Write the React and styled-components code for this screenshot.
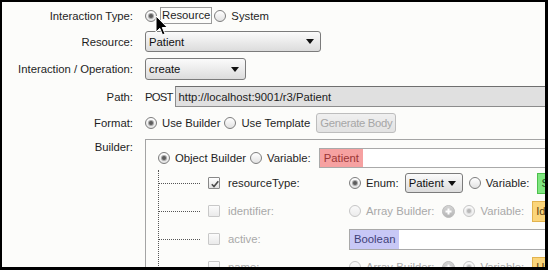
import React from "react";
import styled, { createGlobalStyle } from "styled-components";

const Global = createGlobalStyle`
  html, body { margin: 0; padding: 0; background: #000; }
  * { box-sizing: border-box; }
`;

const Page = styled.div`
  width: 548px;
  height: 270px;
  padding: 2px 3px 3px 2px;
  background: #000;
  font-family: "Liberation Sans", Arial, sans-serif;
  font-size: 11.3px;
  color: #1e1e1e;
`;

const Panel = styled.div`
  position: relative;
  width: 100%;
  height: 100%;
  background: #fcfcfa;
  overflow: hidden;
`;

const Form = styled.div`
  display: grid;
  grid-template-columns: 131px 620px;
  grid-template-rows: 19px 21px 22px 21px 20px auto;
  column-gap: 12px;
  row-gap: 6px;
  padding-top: 4px;
`;

const Label = styled.div`
  text-align: right;
  align-self: ${(p) => (p.$top ? "start" : "center")};
  padding-top: ${(p) => (p.$top ? "2px" : "0")};
  white-space: nowrap;
`;

const Cell = styled.div`
  display: flex;
  align-items: center;
  gap: ${(p) => p.$gap ?? 4}px;
  min-width: 0;
`;

const RadioCircle = styled.span`
  position: relative;
  width: 12px;
  height: 12px;
  flex-shrink: 0;
  border-radius: 50%;
  border: 1px solid ${(p) => (p.$disabled ? "#c6c6c6" : "#7d7d7d")};
  background: ${(p) =>
    p.$disabled
      ? "linear-gradient(#fafafa, #ececec)"
      : "linear-gradient(#ffffff, #e2e2e2)"};
  &::after {
    content: "";
    display: ${(p) => (p.$checked ? "block" : "none")};
    position: absolute;
    left: 3px;
    top: 3px;
    width: 4px;
    height: 4px;
    border-radius: 50%;
    background: ${(p) => (p.$disabled ? "#b8b8b8" : "#5c5c5c")};
    box-shadow: 0 0 0 1px ${(p) => (p.$disabled ? "#dcdcdc" : "#a9a9a9")};
  }
`;

const Option = styled.label`
  display: inline-flex;
  align-items: center;
  gap: 5px;
  white-space: nowrap;
  color: ${(p) => (p.$disabled ? "#a9a9a9" : "inherit")};
`;

const FocusText = styled.span`
  outline: 1px solid #9a9a9a;
  outline-offset: 1px;
  line-height: 13px;
`;

const Radio = ({ checked, disabled, children, focus }) => (
  <Option $disabled={disabled}>
    <RadioCircle $checked={checked} $disabled={disabled} />
    {children != null && (focus ? <FocusText>{children}</FocusText> : <span>{children}</span>)}
  </Option>
);

const Select = styled.div`
  display: flex;
  align-items: center;
  justify-content: space-between;
  width: ${(p) => p.$w}px;
  height: ${(p) => p.$h ?? 21}px;
  flex-shrink: 0;
  padding: 0 6px 0 3px;
  border: 1px solid #7b7b7b;
  border-radius: 3px;
  background: linear-gradient(#fbfbfb, #dcdcdc);
  color: #111;
  white-space: nowrap;
`;

const Arrow = styled.span`
  width: 0;
  height: 0;
  border-left: 4.5px solid transparent;
  border-right: 4.5px solid transparent;
  border-top: 5px solid #111;
`;

const Method = styled.span`
  letter-spacing: -0.8px;
`;

const PathInput = styled.div`
  flex: 1;
  height: 21px;
  display: flex;
  align-items: center;
  padding-left: 3px;
  background: #e0e0e0;
  border: 1px solid #8c8c8c;
  border-top-color: #6e6e6e;
  color: #222;
  white-space: nowrap;
`;

const Button = styled.div`
  height: 20px;
  display: flex;
  align-items: center;
  padding: 0 3px;
  margin-left: 2px;
  border: 1px solid #bdbdbd;
  border-radius: 3px;
  background: linear-gradient(#f0f0f0, #e2e2e2);
  color: #a6a6a6;
  letter-spacing: -0.3px;
  white-space: nowrap;
`;

const BuilderBox = styled.div`
  border: 1px solid #a4a4a4;
  padding: 8px 0 30px 12px;
  height: 200px;
`;

const ObjectRow = styled.div`
  display: flex;
  align-items: center;
  height: 20px;
  gap: 4px;
`;

const TagField = styled.div`
  display: flex;
  align-items: stretch;
  height: ${(p) => p.$h ?? 20}px;
  width: 600px;
  margin-left: ${(p) => p.$ml ?? 0}px;
  flex-shrink: 0;
  border: 1px solid #a9a9a9;
  background: #fff;
`;

const Tag = styled.span`
  display: flex;
  align-items: center;
  padding: 0 4px;
  background: ${(p) => p.$bg};
  color: ${(p) => p.$fg};
  white-space: nowrap;
`;

const TypeBox = styled.div`
  display: flex;
  align-items: center;
  height: 21px;
  width: 120px;
  flex-shrink: 0;
  padding: 0 3px;
  background: ${(p) => p.$bg};
  border: 1px solid ${(p) => p.$border};
  color: ${(p) => p.$fg};
  margin-left: 2px;
  white-space: nowrap;
`;

const Tree = styled.div`
  margin-top: 2px;
  padding-top: 2px;
  border-left: 1px dotted #555;
  display: flex;
  flex-direction: column;
  gap: 6px;
`;

const TreeRow = styled.div`
  display: flex;
  align-items: center;
  height: 22px;
`;

const Connector = styled.span`
  width: 41px;
  height: 0;
  flex-shrink: 0;
  border-top: 1px dotted #555;
  margin-right: 8px;
`;

const CheckBox = styled.span`
  position: relative;
  width: 12px;
  height: 12px;
  flex-shrink: 0;
  border: 1px solid ${(p) => (p.$disabled ? "#c8c8c8" : "#888")};
  border-radius: 1px;
  background: ${(p) =>
    p.$disabled ? "linear-gradient(#fbfbfb, #eaeaea)" : "linear-gradient(#ffffff, #e0e0e0)"};
  margin-right: 8px;
  svg { position: absolute; left: 1px; top: 1px; }
`;

const FieldName = styled.span`
  width: 121px;
  flex-shrink: 0;
  white-space: nowrap;
  color: ${(p) => (p.$disabled ? "#a9a9a9" : "#1e1e1e")};
`;

const FieldCtl = styled.div`
  display: flex;
  align-items: center;
  gap: 6px;
`;

const PlusBtn = styled.svg`
  flex-shrink: 0;
  margin: 0 2px;
`;

const Cursor = styled.svg`
  position: absolute;
  left: 153px;
  top: 13px;
`;

const Plus = () => (
  <PlusBtn width="13" height="13" viewBox="0 0 13 13">
    <defs>
      <linearGradient id="pg" x1="0" y1="0" x2="0" y2="1">
        <stop offset="0" stopColor="#d6d6d6" />
        <stop offset="1" stopColor="#b4b4b4" />
      </linearGradient>
    </defs>
    <circle cx="6.5" cy="6.5" r="6" fill="url(#pg)" stroke="#bdbdbd" />
    <path d="M6.5 3.5v6M3.5 6.5h6" stroke="#fff" strokeWidth="2" />
  </PlusBtn>
);

const Check = () => (
  <svg width="10" height="10" viewBox="0 0 10 10">
    <path d="M1.8 5.2 L4 7.6 L8.3 2.2" fill="none" stroke="#4a4a4a" strokeWidth="1.6" />
  </svg>
);

const ArrayRow = ({ name, type }) => (
  <TreeRow>
    <Connector />
    <CheckBox $disabled />
    <FieldName $disabled>{name}</FieldName>
    <FieldCtl>
      <Radio disabled>Array Builder:</Radio>
      <Plus />
      <Radio disabled checked>Variable:</Radio>
      <TypeBox $bg="#fbd57a" $border="#e2b34e" $fg="#5a4010">{type}</TypeBox>
    </FieldCtl>
  </TreeRow>
);

export default function App() {
  return (
    <>
      <Global />
      <Page>
        <Panel>
          <Form>
            <Label>Interaction Type:</Label>
            <Cell $gap={4}>
              <Radio checked focus>Resource</Radio>
              <Radio>System</Radio>
            </Cell>

            <Label>Resource:</Label>
            <Cell>
              <Select $w={176}>
                <span>Patient</span>
                <Arrow />
              </Select>
            </Cell>

            <Label>Interaction / Operation:</Label>
            <Cell>
              <Select $w={101} $h={22}>
                <span>create</span>
                <Arrow />
              </Select>
            </Cell>

            <Label>Path:</Label>
            <Cell $gap={2}>
              <Method>POST</Method>
              <PathInput>http://localhost:9001/r3/Patient</PathInput>
            </Cell>

            <Label>Format:</Label>
            <Cell $gap={4}>
              <Radio checked>Use Builder</Radio>
              <Radio>Use Template</Radio>
              <Button>Generate Body</Button>
            </Cell>

            <Label $top>Builder:</Label>
            <BuilderBox>
              <ObjectRow>
                <Radio checked>Object Builder</Radio>
                <Radio>Variable:</Radio>
                <TagField $ml={4}>
                  <Tag $bg="#f6a1a1" $fg="#9a3535">Patient</Tag>
                </TagField>
              </ObjectRow>
              <Tree>
                <TreeRow>
                  <Connector />
                  <CheckBox>
                    <Check />
                  </CheckBox>
                  <FieldName>resourceType:</FieldName>
                  <FieldCtl>
                    <Radio checked>Enum:</Radio>
                    <Select $w={58} $h={20}>
                      <span>Patient</span>
                      <Arrow />
                    </Select>
                    <Radio>Variable:</Radio>
                    <TypeBox $bg="#7fe67f" $border="#4cc04c" $fg="#205020">String</TypeBox>
                  </FieldCtl>
                </TreeRow>
                <ArrayRow name="identifier:" type="Identifier" />
                <TreeRow>
                  <Connector />
                  <CheckBox $disabled />
                  <FieldName $disabled>active:</FieldName>
                  <TagField $h={21}>
                    <Tag $bg="#c8c8f6" $fg="#3f3f78">Boolean</Tag>
                  </TagField>
                </TreeRow>
                <ArrayRow name="name:" type="HumanName" />
              </Tree>
            </BuilderBox>
          </Form>
          <Cursor width="14" height="22" viewBox="0 0 14 22">
            <path
              d="M1 1 L1 17 L4.8 13.3 L7.5 19.8 L10 18.8 L7.3 12.5 L12.3 12.5 Z"
              fill="#000"
              stroke="#fff"
              strokeWidth="1"
              strokeLinejoin="round"
            />
          </Cursor>
        </Panel>
      </Page>
    </>
  );
}
